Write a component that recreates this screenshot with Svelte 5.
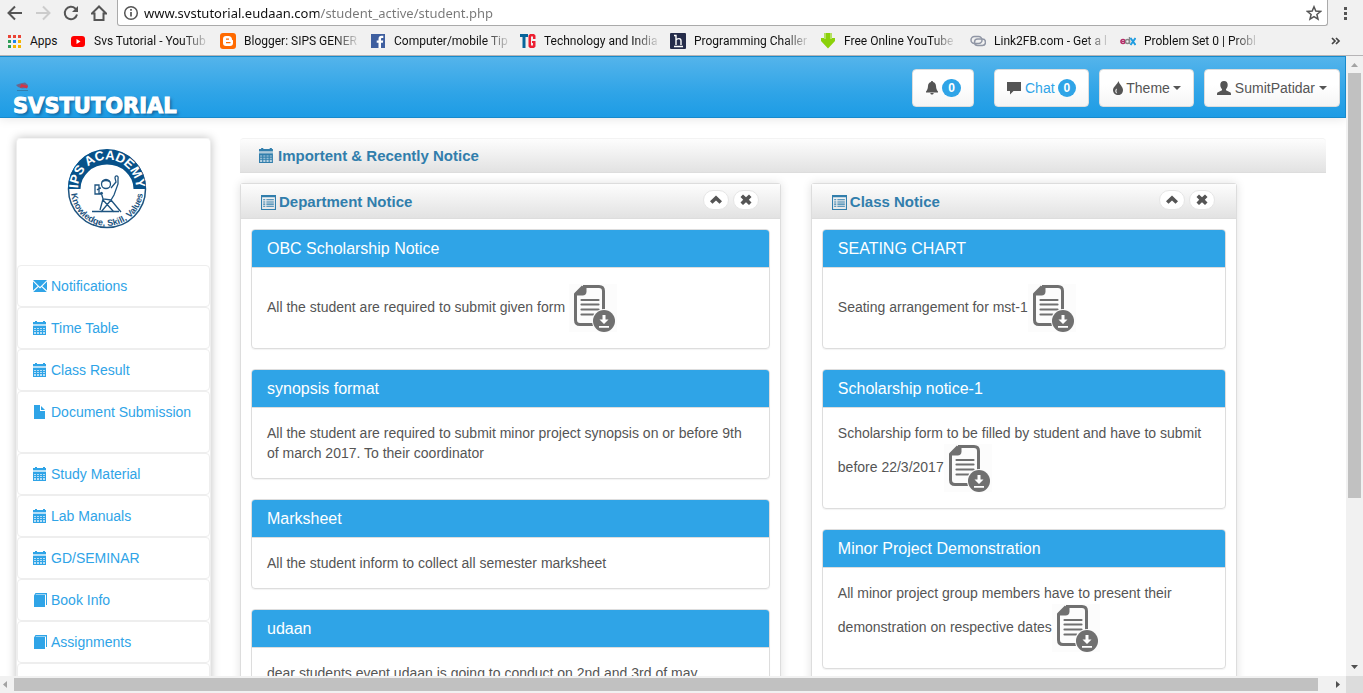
<script>
  const bookmarks = [
    { icon: 'youtube', text: 'Svs Tutorial - YouTub' },
    { icon: 'blogger', text: 'Blogger: SIPS GENER' },
    { icon: 'facebook', text: 'Computer/mobile Tip' },
    { icon: 'tg', text: 'Technology and India' },
    { icon: 'h', text: 'Programming Challer' },
    { icon: 'arrow', text: 'Free Online YouTube' },
    { icon: 'link', text: 'Link2FB.com - Get a l' },
    { icon: 'edx', text: 'Problem Set 0 | Probl' }
  ];

  const menu = [
    { icon: 'envelope', text: 'Notifications' },
    { icon: 'calendar', text: 'Time Table' },
    { icon: 'calendar', text: 'Class Result' },
    { icon: 'file', text: 'Document Submission', tall: true },
    { icon: 'calendar', text: 'Study Material' },
    { icon: 'calendar', text: 'Lab Manuals' },
    { icon: 'calendar', text: 'GD/SEMINAR' },
    { icon: 'book', text: 'Book Info' },
    { icon: 'book', text: 'Assignments' },
    { icon: null, text: '' }
  ];

  const columns = [
    {
      title: 'Department Notice',
      kind: 'department',
      notices: [
        { title: 'OBC Scholarship Notice', body: 'All the student are required to submit given form ', file: true },
        { title: 'synopsis format', body: 'All the student are required to submit minor project synopsis on or before 9th of march 2017. To their coordinator' },
        { title: 'Marksheet', body: 'All the student inform to collect all semester marksheet' },
        { title: 'udaan', body: 'dear students event udaan is going to conduct on 2nd and 3rd of may' }
      ]
    },
    {
      title: 'Class Notice',
      kind: 'class',
      notices: [
        { title: 'SEATING CHART', body: 'Seating arrangement for mst-1', file: true },
        { title: 'Scholarship notice-1', body: 'Scholarship form to be filled by student and have to submit before 22/3/2017', file: true },
        { title: 'Minor Project Demonstration', body: 'All minor project group members have to present their demonstration on respective dates', file: true }
      ]
    }
  ];
</script>

{#snippet glyph(name)}
  <svg class="glyph" viewBox="0 0 14 14" aria-hidden="true">
    {#if name === 'envelope'}
      <path d="M0 1h14L7 8zM0 2.6 4.7 7.2 0 11.6zM14 2.6v9L9.300 7.200zM5.500 8 7 9.400 8.500 8l5.300 5H.2z" />
    {:else if name === 'calendar'}
      <path d="M0 1h2V0h2v1h6V0h2v1h1v2H0z" />
      <path d="M0 3h13v2H0z" opacity=".35" />
      <path d="M0 5h13v9H0z" />
      <path d="M1 7h2v1H1zM4 7h2v1H4zM7 7h2v1H7zM10 7h2v1h-2zM1 9h2v1H1zM4 9h2v1H4zM7 9h2v1H7zM10 9h2v1h-2zM1 11h2v2H1zM4 11h2v2H4zM7 11h2v2H7zM10 11h2v2h-2z" fill="#fff" opacity=".65" />
    {:else if name === 'file'}
      <path d="M1 0h6v6h5v8H1zM8 1l4 4H8z" />
    {:else if name === 'book'}
      <path d="M1 2.500 2.500 0H14v12h-1V1.500H3L2.500 2H12v12H1z" />
    {:else if name === 'list'}
      <path fill-rule="evenodd" d="M0 0h14v14H0zM1 2v11h12V2z" />
      <path d="M2 4h2v1H2zM5 4h7v1H5zM2 6h2v1H2zM5 6h7v1H5zM2 8h2v1H2zM5 8h7v1H5zM2 10h2v1H2zM5 10h7v1H5z" />
    {:else if name === 'bell'}
      <path d="M7 0c.7 0 1 .4 1 1 2 .5 2.800 2 3 4 .2 3 .8 4 2 5.500v.9H1v-.9C2.200 9 2.800 8 3 5c.2-2 1-3.500 3-4 0-.6.3-1 1-1zM5.300 12h3.400c-.2 1-.8 1.500-1.700 1.500S5.500 13 5.300 12z" />
    {:else if name === 'comment'}
      <path d="M0 1h14v9H6.500L3 13.500V10H0z" />
    {:else if name === 'tint'}
      <path fill-rule="evenodd" d="M6.500 0c.5 3 4.500 5.500 4.500 9 0 3-2 5-4.800 5S1 12 1 9c0-3 4.300-5.500 5.500-9zM3.600 8.500c-.8 2 0 3.800 1.700 4-1-1.200-1.200-2.500-.3-5z" />
    {:else if name === 'user'}
      <path d="M7 0c2.500 0 3.700 1.500 3.700 3.800 0 2-.7 3.500-1.700 4.400v1.100l4.500 2.200c.4.300.5.800.5 2.500H0c0-1.700.1-2.200.5-2.500L5 9.300V8.200C4 7.300 3.300 5.800 3.300 3.800 3.300 1.500 4.500 0 7 0z" />
    {:else if name === 'up'}
      <path d="m7 2.500 6 5.800-2.500 2.500L7 7.400l-3.500 3.400L1 8.300z" />
    {:else if name === 'remove'}
      <path d="M1.500 4 4 1.500 7 4.200l3-2.700L12.500 4 9.800 6.700l2.700 2.800L10 12 7 9.300 4 12 1.500 9.500l2.700-2.800z" />
    {/if}
  </svg>
{/snippet}

{#snippet favicon(name)}
  <svg class="favicon" viewBox="0 0 16 16" aria-hidden="true">
    {#if name === 'youtube'}
      <rect x="1" y="3" width="14" height="11" rx="3" fill="#f00" /><path d="m6.500 6 4 2.500-4 2.500z" fill="#fff" />
    {:else if name === 'blogger'}
      <rect width="16" height="16" rx="3" fill="#ff6a00" />
      <path fill="#fff" fill-rule="evenodd" d="M6 3h2.500C10.500 3 12 4.500 12 6.500c0 .5.300.7 1 .7V10c0 2-1 3-3 3H6c-2 0-3-1-3-3V6c0-2 1-3 3-3zm0 2.500v1.300h3V5.500zM6 9v1.300h4.500V9z" />
    {:else if name === 'facebook'}
      <rect x="1" y="1" width="14" height="14" fill="#3f5f9f" />
      <path fill="#fff" d="M8.500 15V9.700H6.700V7.500h1.800V6c0-2.100 1.200-3.200 3-3.200h1.800V5h-1.200c-.9 0-1.100.4-1.100 1.100v1.400h2.200l-.3 2.200H11V15z" />
    {:else if name === 'tg'}
      <path fill="#08659b" d="M0 1h8v3H5.500v11h-3V4H0z" />
      <path fill="#ed2032" d="M10 1h4l1.500 1.500V6H13V3.500h-2v9h2V10h-1V8h3.500v5.500L14 15h-4l-1.500-1.500v-11z" />
    {:else if name === 'h'}
      <rect width="16" height="16" rx="1" fill="#252c4a" />
      <path d="M4 2.500h2V12M6 7c1.500-2 5-2 5 .8V12M4 13.500h9" fill="none" stroke="#fff" stroke-width="1.400" />
    {:else if name === 'arrow'}
      <path d="M4 0h8v5h3v3l-7 7.500L1 8V5h3z" fill="#8bd10a" /><path d="M4.500 0h1v6h-1zM10.500 0h1v6h-1z" fill="#fff" opacity=".7" />
    {:else if name === 'link'}
      <rect x="1" y="3.500" width="11" height="7" rx="3.500" fill="none" stroke="#9096a5" stroke-width="1.500" />
      <rect x="4.500" y="6" width="11" height="6.500" rx="3.200" fill="none" stroke="#9096a5" stroke-width="1.500" />
    {:else if name === 'edx'}
      <circle cx="3" cy="8.500" r="2" fill="none" stroke="#b52a67" stroke-width="1.600" /><path d="M2 8.500h3" stroke="#b52a67" />
      <circle cx="7.500" cy="8.500" r="2" fill="none" stroke="#888" stroke-width="1.400" /><path d="M9.500 4v7" stroke="#888" stroke-width="1.400" />
      <path d="m10.500 5 5 7m0-7-5 7" stroke="#1f9ce0" stroke-width="2" />
    {/if}
  </svg>
{/snippet}

{#snippet download()}
  <svg class="download" viewBox="0 0 48 48" role="img" aria-label="Download">
    <rect width="48" height="48" fill="#fcfcfc" />
    <path d="M14 2.500h16c3 0 4.500 1.500 4.500 4.500v20M24 40.500H11c-3 0-4.500-1.500-4.500-4.500V10L14 2.500" fill="none" stroke="#707070" stroke-width="3" stroke-linejoin="round" />
    <path d="M14 2h3.500v5.500c0 2.500-1.500 4-4 4H6V10z" fill="#707070" />
    <path d="M12.500 16h17M12.500 20.500h17M12.500 25.500h17M12.500 30.500h12" stroke="#707070" stroke-width="2.200" stroke-linecap="round" />
    <circle cx="35" cy="37" r="12" fill="#fcfcfc" /><circle cx="35" cy="37" r="11" fill="#707070" />
    <path d="M33.500 31h3v4.500h3L35 40l-4.500-4.500h3zM30 42h10v1.800H30z" fill="#fff" />
  </svg>
{/snippet}

<div class="window">
  <div class="toolbar">
    <button aria-label="Back"><svg viewBox="0 0 16 16"><path d="M15 8H2m6-6.500L1.500 8 8 14.500" fill="none" stroke="#555" stroke-width="2" /></svg></button>
    <button aria-label="Forward"><svg viewBox="0 0 16 16"><path d="M1 8h13M8 1.500 14.500 8 8 14.500" fill="none" stroke="#ccc" stroke-width="2" /></svg></button>
    <button aria-label="Reload"><svg viewBox="0 0 16 16"><path d="M14 9.500A6.200 6.200 0 1 1 12.300 3.500L14 5" fill="none" stroke="#555" stroke-width="2" /><path d="M15 1v6H9z" fill="#555" /></svg></button>
    <button aria-label="Home"><svg viewBox="0 0 16 16"><path d="M8 1.500.8 8.500H3.500V15h9V8.500h2.700z" fill="none" stroke="#555" stroke-width="2" /></svg></button>
    <div class="address">
      <svg viewBox="0 0 16 16" aria-hidden="true"><circle cx="8" cy="8" r="6.300" fill="none" stroke="#555" stroke-width="1.500" /><path d="M8 7v4.500M8 4v1.700" stroke="#555" stroke-width="1.700" /></svg>
      <input aria-label="Address" value="www.svstutorial.eudaan.com/student_active/student.php" />
      <button aria-label="Bookmark this page"><svg viewBox="0 0 16 16"><path d="m8 1.800 1.800 4.300 4.700.4-3.600 3 1.100 4.600L8 11.600l-4 2.500 1.100-4.600-3.600-3 4.700-.4z" fill="none" stroke="#555" stroke-width="1.500" /></svg></button>
    </div>
    <button class="more" aria-label="Menu"><svg viewBox="0 0 16 16"><path d="M7 2h3v3H7zM7 7h3v3H7zM7 12h3v3H7z" fill="#555" /></svg></button>
  </div>

  <nav class="bookmarks" aria-label="Bookmarks">
    <a class="apps" href="#apps">
      <svg class="favicon" viewBox="0 0 16 16" aria-hidden="true">
        <path d="M2 2h3v3H2zM7 2h3v3H7zM12 2h3v3h-3z" fill="#ea4335" />
        <path d="M2 7h3v3H2zM2 12h3v3H2z" fill="#2f9e57" /><path d="M7 7h3v3H7z" fill="#1a83f0" /><path d="M7 12h3v3H7zM12 7h3v3h-3zM12 12h3v3h-3z" fill="#f4b400" />
      </svg>
      <span>Apps</span>
    </a>
    {#each bookmarks as b}
      <a class="bookmark" href="#bookmark">{@render favicon(b.icon)}<span>{b.text}</span></a>
    {/each}
    <button class="overflow" aria-label="More bookmarks"><svg viewBox="0 0 10 8"><path d="m1 1 3 3-3 3m4-6 3 3-3 3" fill="none" stroke="#444" stroke-width="1.700" /></svg></button>
  </nav>

  <div class="viewport">
    <div class="page">
      <header>
        <a class="brand" href="#home">
          <svg viewBox="0 0 14 10" aria-hidden="true"><path d="m0 3 4-1.500L9 .5 12 3l-1 3-5 .5L2 5z" fill="#6d668c" /><path d="m5 2 4 1 3 1-1 2.500L7 5 4 6z" fill="#d33346" /><path d="M1 8.500h11" stroke="#347fae" /></svg>
          <span>SVSTUTORIAL</span>
        </a>
        <div class="actions">
          <button class="btn bell" aria-label="Notifications 0">{@render glyph('bell')}<span class="badge">0</span></button>
          <button class="btn chat">{@render glyph('comment')}<span class="blue">Chat</span><span class="badge">0</span></button>
          <button class="btn theme">{@render glyph('tint')}<span>Theme</span><span class="caret"></span></button>
          <button class="btn">{@render glyph('user')}<span>SumitPatidar</span><span class="caret"></span></button>
        </div>
      </header>

      <div class="layout">
        <aside>
          <svg class="seal" viewBox="0 0 80 82" role="img" aria-label="IPS Academy: Knowledge, Skill, Values">
            <defs>
              <path id="arc-top" d="M11.500 46a29 29 0 1 1 57 0" />
              <path id="arc-bottom" d="M4.500 36a36 36 0 1 0 71 0" />
            </defs>
            <circle cx="40" cy="41" r="38.500" fill="#fff" stroke="#1e5480" stroke-width="1.500" />
            <path d="M1 41a39 40 0 0 1 78 0H66.500a26.500 24.500 0 0 0-53 0z" fill="#075189" />
            <text class="seal-top"><textPath href="#arc-top" startOffset="50%" text-anchor="middle">IPS ACADEMY</textPath></text>
            <text class="seal-bottom"><textPath href="#arc-bottom" startOffset="50%" text-anchor="middle">Knowledge, Skill, Values</textPath></text>
            <g fill="none" stroke="#1e5480" stroke-width="1.300">
              <circle cx="39" cy="36" r="4.500" /><path d="M35 34c2-2 6-2 8 0" />
              <path d="M34 40c-1 0-3 1-4 2M28 37h4v9h-4zM32 46l4-1M44 40l5-6-1-4c0-3 4-3 3 1v5L47 47l-3 5-8-1-2-7M36 51l-3 11M44 52l10 12M44 52 34 64M36 52l11 12M25 63.500h27" />
            </g>
          </svg>
          <ul>
            {#each menu as m}
              <li class:tall={m.tall}>{#if m.icon}<a href="#menu">{@render glyph(m.icon)}<span>{m.text}</span></a>{/if}</li>
            {/each}
          </ul>
        </aside>

        <main>
          <h2 class="title">{@render glyph('calendar')}<span>Importent &amp; Recently Notice</span></h2>
          <div class="columns">
            {#each columns as c}
              <section class={['box', c.kind]}>
                <div class="box-head">
                  <h2>{@render glyph('list')}<span>{c.title}</span></h2>
                  <button class="round" aria-label="Collapse">{@render glyph('up')}</button>
                  <button class="round" aria-label="Close">{@render glyph('remove')}</button>
                </div>
                <div class="box-body">
                  {#each c.notices as n}
                    <article>
                      <h3>{n.title}</h3>
                      <p>{n.body}{#if n.file}<a href="#file">{@render download()}</a>{/if}</p>
                    </article>
                  {/each}
                </div>
              </section>
            {/each}
          </div>
        </main>
      </div>
    </div>

    <div class="vbar" aria-hidden="true">
      <svg viewBox="0 0 17 17"><path d="M5 11h7L8.500 7z" fill="#a3a3a3" /></svg>
      <div class="track"><div class="thumb"></div></div>
      <svg viewBox="0 0 17 17"><path d="M5 6h7L8.500 10z" fill="#505050" /></svg>
    </div>
    <div class="hbar" aria-hidden="true">
      <svg viewBox="0 0 14 17"><path d="M7 5v7L3 8.500z" fill="#a3a3a3" /></svg>
      <div class="track"><div class="thumb"></div></div>
      <svg class="end" viewBox="0 0 17 17"><path d="M7 5v7l4-3.500z" fill="#505050" /></svg>
    </div>
    <div class="corner"></div>
  </div>
</div>

<style>
  :global(body) { margin: 0; overflow: hidden; }
  .window, .window * { box-sizing: border-box; }
  .window {
    display: flex; flex-direction: column; height: 100vh; background: #fff;
    font: 14px/20px "Liberation Sans", Arial, sans-serif; color: #555;
  }
  svg { display: block; flex: none; }
  a { color: #2fa4e7; text-decoration: none; }
  button { font: inherit; color: inherit; border: 0; background: none; padding: 0; }
  h2, h3, p, ul { margin: 0; padding: 0; }
  .glyph { width: 14px; height: 14px; fill: currentColor; }

  .toolbar { display: flex; gap: 12px; height: 26px; padding-left: 7px; background: #f1f1f1; }
  .toolbar svg { width: 16px; height: 16px; }
  .toolbar > button { height: 25px; }
  .address {
    flex: 1; display: flex; align-items: center; gap: 5px; height: 26px; margin-left: -2px; padding: 0 5px;
    background: #fff; border: 1px solid #aaa; border-top: 0; border-radius: 0 0 3px 3px;
  }
  .address input {
    flex: 1; height: 24px; border: 0; padding: 0; outline: 0; color: transparent;
    font: 13px "Noto Sans", "Open Sans", sans-serif;
    background: linear-gradient(90deg, #111 175px, #777 175px); background-clip: text; -webkit-background-clip: text;
  }
  .more { margin: 0 10px 0 -3px; }

  .bookmarks {
    display: flex; align-items: center; gap: 14px; height: 30px; padding: 0 22px 0 6px; background: #f1f1f1;
    border-bottom: 1px solid #b6b4b6; font: 12px/20px Roboto, "Open Sans", sans-serif;
  }
  .bookmarks a { display: flex; align-items: center; gap: 8px; color: #111; white-space: nowrap; }
  .bookmarks .apps { width: 50px; }
  .bookmarks .bookmark { width: 136px; }
  .bookmark span { mask-image: linear-gradient(90deg, #000 80%, rgba(0, 0, 0, .15)); }
  .favicon { width: 16px; height: 16px; }
  .overflow { margin-left: auto; }
  .overflow svg { width: 10px; height: 8px; }

  .viewport { flex: 1; min-height: 0; display: grid; grid-template: minmax(0, 1fr) 17px / minmax(0, 1fr) 17px; }
  .page { overflow: hidden; }
  header {
    display: flex; justify-content: space-between; height: 62px; padding: 12px 5px 0 12px;
    border: 1px solid #178acc; border-width: 1px 1px 1px 0;
    background: linear-gradient(#54b4eb, #2fa4e7 60%, #1d9ce5); box-shadow: 0 1px 10px rgba(0, 0, 0, .1);
  }
  .brand { display: flex; flex-direction: column; padding: 13px 0 0 1px; color: #fff; }
  .brand svg { width: 14px; height: 10px; margin-left: 3px; }
  .brand span { font: bold 21px/28px "DejaVu Sans", sans-serif; -webkit-text-stroke: 1px #fff; text-shadow: 2px 2px 3px rgba(0, 40, 80, .5); }
  .actions { display: flex; gap: 10px; }
  .btn {
    display: flex; align-items: center; gap: 4px; height: 38px; padding: 0 12px;
    border: 1px solid #ddd; border-radius: 4px; background: linear-gradient(#fff 40%, #f5f5f5);
  }
  .bell { margin-right: 10px; gap: 3px; }
  .chat { gap: 3px; }
  .theme { gap: 0; }
  .theme .caret { margin-left: 3px; }
  .blue { color: #2fa4e7; margin-left: 1px; }
  .badge { padding: 3px 6px; border-radius: 10px; background: #2fa4e7; color: #fff; font-size: 12px; font-weight: bold; line-height: 12px; }
  .caret { border: 4px solid transparent; border-top-color: #555; border-bottom: 0; }

  .layout { display: flex; align-items: flex-start; gap: 29px; padding: 20px 20px 0 16px; }
  aside {
    flex: none; width: 195px; border-radius: 4px; background: #fff; border: 1px solid #eee; border-top-color: #f5f5f5;
    box-shadow: 0 0 10px rgba(0, 0, 0, .25);
  }
  .seal { width: 80px; height: 82px; margin: 9px auto 35px 50px; }
  .seal-top { font: bold 13px "Liberation Sans Narrow", "Liberation Sans", Arial, sans-serif; fill: #fff; }
  .seal-bottom { font: bold 9px "Liberation Sans", Arial, sans-serif; fill: #1e5480; }
  ul { list-style: none; }
  li { height: 42px; padding: 10px 15px; border: 1px solid #eee; border-radius: 4px; }
  li.tall { height: 62px; }
  li a { display: flex; align-items: center; gap: 4px; }

  main { flex: 1; min-width: 0; }
  .title, .box h2 { display: flex; align-items: center; color: #317eac; font-size: 15px; line-height: 20px; }
  .title {
    gap: 4px; height: 35px; padding: 0 19px; border-bottom: 1px solid #ddd; border-top: 1px solid #f3f3f3;
    border-radius: 4px 4px 0 0; background: linear-gradient(#fdfdfd, #e2e2e2);
  }
  h2 .glyph { width: 15px; height: 15px; }
  .columns { display: flex; align-items: flex-start; gap: 30px; margin-top: 10px; }
  .box { border: 1px solid #ddd; border-radius: 3px; background: #fff; box-shadow: 0 0 10px rgba(0, 0, 0, .12); }
  .department { width: 49.8%; }
  .class { width: 39.2%; }
  .box-head {
    display: flex; align-items: center; gap: 4px; height: 35px; padding: 0 21px 0 20px;
    border-bottom: 1px solid #ddd; background: linear-gradient(#fdfdfd, #e2e2e2);
  }
  .box h2 { flex: 1; gap: 3px; padding-top: 2px; }
  .round {
    display: flex; align-items: center; justify-content: center; width: 26px; height: 20px; margin-bottom: 2px;
    border: 1px solid #e6e6e6; border-radius: 10px; background: #fff;
  }
  .box-body { display: flex; flex-direction: column; gap: 20px; padding: 10px 10px 20px; }
  article { border: 1px solid #ddd; border-radius: 4px; overflow: hidden; box-shadow: 0 1px 1px rgba(0, 0, 0, .05); }
  h3 { height: 38px; padding: 9px 15px; border-bottom: 1px solid #ddd; background: #2fa4e7; color: #fff; font-size: 16px; font-weight: normal; line-height: 19px; }
  p { padding: 15px; }
  .download { display: inline-block; width: 48px; height: 50px; vertical-align: middle; }

  .vbar { display: flex; flex-direction: column; background: #f1f1f1; }
  .vbar svg { width: 17px; height: 17px; }
  .vbar .track, .hbar .track { flex: 1; }
  .vbar .thumb { width: 13px; height: 72.500%; margin: 0 auto; background: #c1c1c1; }
  .hbar { display: flex; align-items: center; background: #f1f1f1; }
  .hbar svg { width: 14px; height: 17px; }
  .hbar .end { width: 17px; }
  .hbar .thumb { height: 13px; width: 99.200%; background: #c1c1c1; }
  .corner { background: #dcdcdc; }
</style>
